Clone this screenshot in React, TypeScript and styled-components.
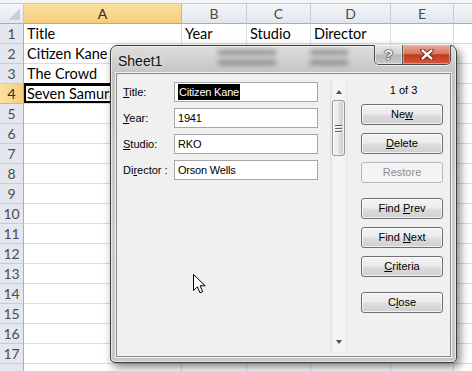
import React from 'react';
import styled, { createGlobalStyle } from 'styled-components';

const GlobalStyle = createGlobalStyle`
  html, body {
    margin: 0;
    padding: 0;
    background: #fff;
    overflow: hidden;
  }
`;

const columns = [
  { name: 'A', width: 158 },
  { name: 'B', width: 65 },
  { name: 'C', width: 64 },
  { name: 'D', width: 80 },
  { name: 'E', width: 63 },
  { name: '', width: 60 },
];

const cells: Record<number, string[]> = {
  1: ['Title', 'Year', 'Studio', 'Director'],
  2: ['Citizen Kane', '1941', 'RKO', 'Orson Wells'],
  3: ['The Crowd', '1928', 'MGM', 'King Vidor'],
  4: ['Seven Samurai', '1954', 'Toho', 'Akira Kurosawa'],
};

const ACTIVE_ROW = 4;
const ACTIVE_COL = 0;
const VISIBLE_ROWS = 17;

const fields = [
  { pre: '', key: 'T', rest: 'itle:', value: 'Citizen Kane', selected: true },
  { pre: '', key: 'Y', rest: 'ear:', value: '1941' },
  { pre: '', key: 'S', rest: 'tudio:', value: 'RKO' },
  { pre: 'Di', key: 'r', rest: 'ector :', value: 'Orson Wells' },
];

// smudges of the cells seen through the glass title bar
const smudges = [
  { gap: 56, w: 58 },
  { gap: 34, w: 38 },
];

const App = () => {
  // one extra row peeks out at the bottom edge
  const rows = Array.from({ length: VISIBLE_ROWS + 1 }, (_, i) => i + 1);

  return (
    <Page>
      <GlobalStyle />
      <TopStrip />
      <Row>
        <Corner>
          <CornerTriangle />
        </Corner>
        {columns.map((c, i) => (
          <ColHeader key={i} width={c.width} active={i === ACTIVE_COL}>
            {c.name}
          </ColHeader>
        ))}
      </Row>
      {rows.map((r) => (
        <Row key={r}>
          <RowHeader active={r === ACTIVE_ROW}>{r <= VISIBLE_ROWS ? r : ''}</RowHeader>
          {columns.map((c, i) => (
            <Cell key={i} width={c.width} active={r === ACTIVE_ROW && i === ACTIVE_COL}>
              {cells[r]?.[i] ?? ''}
            </Cell>
          ))}
        </Row>
      ))}

      <Window>
        <TitleBar>
          <Caption>Sheet1</Caption>
          {smudges.map((s, i) => (
            <Smudge key={i} gap={s.gap} w={s.w}>
              <SmudgeLine />
              <SmudgeLine />
            </Smudge>
          ))}
          <CaptionButtons>
            <HelpButton>?</HelpButton>
            <CloseButton>
              <svg width="14" height="11" viewBox="0 0 14 11">
                <path d="M2.5 1.5 L11.5 9.5 M11.5 1.5 L2.5 9.5" stroke="#4a1408" strokeWidth="4.2" strokeLinecap="round" />
                <path d="M2.5 1.5 L11.5 9.5 M11.5 1.5 L2.5 9.5" stroke="#fff" strokeWidth="2.4" strokeLinecap="round" />
              </svg>
            </CloseButton>
          </CaptionButtons>
        </TitleBar>

        <Client>
          <Fields>
            {fields.map((f) => (
              <FieldRow key={f.rest}>
                <Label>
                  {f.pre}
                  <U>{f.key}</U>
                  {f.rest}
                </Label>
                <TextBox>
                  {f.selected ? <Selection>{f.value}</Selection> : f.value}
                </TextBox>
              </FieldRow>
            ))}
          </Fields>

          <ScrollBar>
            <ArrowBox>
              <ArrowUp />
            </ArrowBox>
            <Thumb>
              <Grip />
              <Grip />
              <Grip />
            </Thumb>
            <Track />
            <ArrowBox>
              <ArrowDown />
            </ArrowBox>
          </ScrollBar>

          <SidePanel>
            <Counter>1 of 3</Counter>
            <Button>
              Ne<U>w</U>
            </Button>
            <Button>
              <U>D</U>elete
            </Button>
            <Button disabled>Restore</Button>
            <Button groupStart>
              Find <U>P</U>rev
            </Button>
            <Button>
              Find <U>N</U>ext
            </Button>
            <Button>
              <U>C</U>riteria
            </Button>
            <Button groupStart>
              C<U>l</U>ose
            </Button>
          </SidePanel>
        </Client>
      </Window>

      <Cursor width="13" height="20" viewBox="0 0 13 20">
        <path
          d="M0.5 0.5 L0.5 16.5 L4.4 12.8 L7 18.8 L9.6 17.7 L7.1 11.8 L12.2 11.8 Z"
          fill="#fff"
          stroke="#000"
          strokeWidth="1"
        />
      </Cursor>
    </Page>
  );
};

const Page = styled.div`
  position: relative;
  width: 472px;
  height: 371px;
  overflow: hidden;
  background: #fff;
  font-family: Lato, 'Open Sans', sans-serif;
`;

const TopStrip = styled.div`
  height: 3px;
  background: #f4f4f4;
  border-bottom: 1px solid #c8ccd2;
`;

const Row = styled.div`
  display: flex;
  height: 20px;
`;

const Corner = styled.div`
  flex: none;
  width: 24px;
  box-sizing: border-box;
  display: flex;
  align-items: flex-end;
  justify-content: flex-end;
  padding: 0 3px 3px 0;
  background: linear-gradient(#f4f6f9, #e3e8ee);
  border-right: 1px solid #c0c8d3;
  border-bottom: 1px solid #9eb0c6;
`;

const CornerTriangle = styled.div`
  width: 11px;
  height: 11px;
  background: linear-gradient(135deg, transparent 50%, #c9ced6 50%);
`;

const ColHeader = styled.div<{ width: number; active?: boolean }>`
  flex: none;
  width: ${({ width }) => width}px;
  box-sizing: border-box;
  display: flex;
  align-items: center;
  justify-content: center;
  font-size: 14px;
  color: ${({ active }) => (active ? '#2c2c2c' : '#4c4c4c')};
  background: ${({ active }) =>
    active ? 'linear-gradient(#fbe0a2, #f6cd78)' : 'linear-gradient(#f2f5f8, #e2e7ee)'};
  border-right: 1px solid ${({ active }) => (active ? '#e8b35a' : '#c6cdd7')};
  border-bottom: 1px solid ${({ active }) => (active ? '#e7a33c' : '#9eb0c6')};
`;

const RowHeader = styled.div<{ active?: boolean }>`
  flex: none;
  width: 24px;
  box-sizing: border-box;
  display: flex;
  align-items: center;
  justify-content: center;
  font-size: 14px;
  color: ${({ active }) => (active ? '#2c2c2c' : '#4c4c4c')};
  background: ${({ active }) => (active ? 'linear-gradient(90deg, #fbe0a2, #f6cd78)' : '#e4e8ee')};
  border-right: 1px solid ${({ active }) => (active ? '#e7a33c' : '#9eb0c6')};
  border-bottom: 1px solid ${({ active }) => (active ? '#e8b35a' : '#c6cdd7')};
`;

const Cell = styled.div<{ width: number; active?: boolean }>`
  flex: none;
  width: ${({ width }) => width}px;
  box-sizing: border-box;
  padding: 0 3px;
  font-size: 14.5px;
  line-height: 19px;
  color: #000;
  white-space: nowrap;
  overflow: hidden;
  border-right: 1px solid #dadcdd;
  border-bottom: 1px solid #dadcdd;
  box-shadow: ${({ active }) => (active ? 'inset 0 0 0 2px #000, 0 -1px 0 #000' : 'none')};
`;

const Window = styled.div`
  position: absolute;
  left: 110px;
  top: 45px;
  width: 347px;
  height: 318px;
  box-sizing: border-box;
  display: flex;
  flex-direction: column;
  padding: 0 5px 5px 5px;
  border: 1px solid #3f3f3f;
  border-radius: 7px 7px 5px 5px;
  background: linear-gradient(#dedede, #c3c3c3 28px, #cdcecf 60%, #c7c8c9);
  box-shadow: 3px 4px 10px rgba(0, 0, 0, 0.5), inset 0 0 0 1px rgba(255, 255, 255, 0.55);
  font-family: 'Liberation Sans', Arial, sans-serif;
  font-size: 11px;
  color: #000;
`;

const TitleBar = styled.div`
  height: 27px;
  display: flex;
  align-items: flex-start;
`;

const Caption = styled.div`
  flex: none;
  padding: 7px 0 0 2px;
  font-size: 14px;
  line-height: 16px;
  color: #111;
  text-shadow: 0 0 6px rgba(255, 255, 255, 0.9);
`;

const Smudge = styled.div<{ gap: number; w: number }>`
  flex: none;
  width: ${({ w }) => w}px;
  margin: 4px 0 0 ${({ gap }) => gap}px;
  display: flex;
  flex-direction: column;
  gap: 5px;
  filter: blur(2.5px);
`;

const SmudgeLine = styled.div`
  height: 5px;
  background: rgba(60, 60, 60, 0.45);
`;

const CaptionButtons = styled.div`
  margin: -1px 0 0 auto;
  display: flex;
  height: 19px;
  border: 1px solid #4d4d4d;
  border-top: none;
  border-radius: 0 0 5px 5px;
  overflow: hidden;
  box-shadow: 0 1px 0 rgba(255, 255, 255, 0.6);
`;

const HelpButton = styled.div`
  width: 27px;
  display: flex;
  align-items: center;
  justify-content: center;
  font-size: 15px;
  line-height: 17px;
  font-weight: bold;
  color: #f4f4f4;
  text-shadow: 0 0 1px #222, 0 0 1px #222, 0 0 2px #444;
  background: linear-gradient(#e9e9e9, #d1d1d1 48%, #b8b8b8 52%, #c9c9c9);
  border-right: 1px solid #5a5a5a;
  box-shadow: inset 0 0 0 1px rgba(255, 255, 255, 0.45);
`;

const CloseButton = styled.div`
  width: 47px;
  display: flex;
  align-items: center;
  justify-content: center;
  background: linear-gradient(#e9a898, #d77a62 45%, #c4391c 52%, #d45a3c);
  box-shadow: inset 0 0 0 1px rgba(255, 220, 210, 0.45);
`;

const Client = styled.div`
  flex: 1;
  display: flex;
  box-sizing: border-box;
  padding: 0 7px 4px 6px;
  background: #f0f0f0;
  border: 1px solid #8a8a8a;
  box-shadow: 0 0 0 1px rgba(255, 255, 255, 0.75);
`;

const Fields = styled.div`
  width: 195px;
  padding-top: 8px;
  display: flex;
  flex-direction: column;
  gap: 6px;
`;

const FieldRow = styled.div`
  display: flex;
  align-items: center;
  height: 20px;
`;

const Label = styled.div`
  width: 51px;
  flex: none;
  white-space: nowrap;
`;

const U = styled.span`
  text-decoration: underline;
  text-underline-offset: 1px;
`;

const TextBox = styled.div`
  flex: 1;
  height: 20px;
  box-sizing: border-box;
  padding: 1px 3px;
  background: #fff;
  border: 1px solid #a7a7a7;
  line-height: 16px;
  letter-spacing: -0.2px;
  white-space: nowrap;
  overflow: hidden;
`;

const Selection = styled.span`
  display: inline-block;
  padding: 0 1px;
  background: #000;
  color: #fff;
`;

const ScrollBar = styled.div`
  width: 18px;
  margin: 6px 0 0 12px;
  display: flex;
  flex-direction: column;
  box-sizing: border-box;
  border-left: 1px solid #e0e0e0;
  border-right: 1px solid #e6e6e6;
  background: linear-gradient(90deg, #ececec, #f5f5f5 30%, #f5f5f5 70%, #ececec);
`;

const ArrowBox = styled.div`
  height: 20px;
  flex: none;
  display: flex;
  align-items: center;
  justify-content: center;
`;

const ArrowUp = styled.div`
  width: 0;
  height: 0;
  margin-top: 3px;
  border-left: 3.5px solid transparent;
  border-right: 3.5px solid transparent;
  border-bottom: 4px solid #505050;
`;

const ArrowDown = styled(ArrowUp)`
  margin-top: 0;
  border-bottom: none;
  border-top: 4px solid #505050;
`;

const Thumb = styled.div`
  height: 56px;
  margin: 0 2px 0 1px;
  box-sizing: border-box;
  display: flex;
  flex-direction: column;
  align-items: center;
  justify-content: center;
  gap: 2px;
  border: 1px solid #979797;
  border-radius: 3px;
  background: linear-gradient(90deg, #f6f6f6, #e9e9e9 50%, #d9d9d9 51%, #d2d2d2);
  box-shadow: inset 0 0 0 1px rgba(255, 255, 255, 0.7);
`;

const Grip = styled.div`
  width: 7px;
  height: 1px;
  background: #5e5e5e;
  box-shadow: 0 1px 0 #fafafa;
`;

const Track = styled.div`
  flex: 1;
`;

const SidePanel = styled.div`
  width: 82px;
  margin-left: 13px;
  padding-top: 6px;
  display: flex;
  flex-direction: column;
`;

const Counter = styled.div`
  height: 20px;
  margin-bottom: 4px;
  line-height: 20px;
  text-align: center;
  padding-left: 3px;
`;

const Button = styled.div<{ disabled?: boolean; groupStart?: boolean }>`
  flex: none;
  height: 21px;
  margin-top: ${({ groupStart }) => (groupStart ? '7px' : '0')};
  margin-bottom: 8px;
  box-sizing: border-box;
  line-height: 19px;
  text-align: center;
  white-space: nowrap;
  border-radius: 3px;
  border: 1px solid ${({ disabled }) => (disabled ? '#b5b9bc' : '#707070')};
  color: ${({ disabled }) => (disabled ? '#8d8d8d' : '#000')};
  background: ${({ disabled }) =>
    disabled ? '#f4f4f4' : 'linear-gradient(#f3f3f3, #ebebeb 48%, #dddddd 52%, #cfcfcf)'};
  box-shadow: ${({ disabled }) => (disabled ? 'none' : 'inset 0 0 0 1px rgba(255, 255, 255, 0.7)')};
`;

const Cursor = styled.svg`
  position: absolute;
  left: 193px;
  top: 274px;
`;

export default App;
